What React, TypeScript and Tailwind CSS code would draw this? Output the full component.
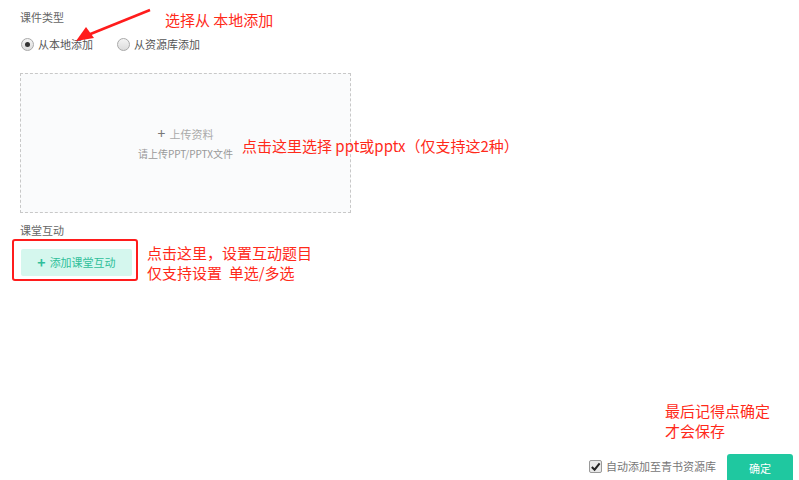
import React from "react"

const note = "absolute text-[15px] leading-[20px] text-[#ff2a1a] whitespace-nowrap"

function Radio({ checked, label }: { checked?: boolean; label: string }) {
  return (
    <label className="flex items-center gap-[4px] text-[11px] text-[#555]">
      <span className="flex h-[13px] w-[13px] items-center justify-center rounded-full border border-[#a9a9a9] bg-gradient-to-b from-[#f4f4f4] to-[#dcdcdc]">
        {checked && <span className="h-[5px] w-[5px] rounded-full bg-[#333]" />}
      </span>
      {label}
    </label>
  )
}

export default function App() {
  return (
    <div className="relative flex h-[480px] w-[799px] flex-col overflow-hidden bg-white font-['Noto_Sans_CJK_SC','Noto_Sans',sans-serif]">
      <div className="flex flex-col pl-[20px] pt-[9px]">
        <div className="text-[11px] leading-[16px] text-[#666]">课件类型</div>
        <div className="mt-[11px] flex items-center gap-[24px] pl-[1px]">
          <Radio checked label="从本地添加" />
          <Radio label="从资源库添加" />
        </div>

        <div className="mt-[20px] flex h-[140px] w-[331px] flex-col items-center justify-center border border-dashed border-[#c8c8c8] bg-[#fafbfc]">
          <div className="text-[11px] leading-[16px] text-[#aaa]">
            <span className="mr-[4px] text-[14px] text-[#777]">+</span>上传资料
          </div>
          <div className="mt-[5px] text-[10px] leading-[14px] text-[#999]">请上传PPT/PPTX文件</div>
        </div>

        <div className="mt-[9px] text-[11px] leading-[16px] text-[#666]">课堂互动</div>
        <div className="ml-[-8px] mt-[1px] w-[126px] rounded-[3px] border-2 border-[#ff1c1c] pb-[3px] pl-[7px] pt-[8px]">
          <button className="flex h-[27px] w-[111px] items-center justify-center rounded-[2px] bg-[#d5f7ee] text-[11px] text-[#2fbf9a]">
            <span className="mr-[4px] text-[14px] font-bold">+</span>添加课堂互动
          </button>
        </div>
      </div>

      <div className="mt-auto flex items-center justify-end gap-[11px] pr-[6px]">
        <label className="flex items-center gap-[4px] text-[11px] text-[#777]">
          <span className="flex h-[13px] w-[13px] items-center justify-center rounded-[2px] border border-[#999] bg-[#e8e8e8]">
            <svg width="11" height="11" viewBox="0 0 12 12">
              <path d="M2 6.5 L5 9.5 L10.5 2.5" fill="none" stroke="#222" strokeWidth="2.2" />
            </svg>
          </span>
          自动添加至青书资源库
        </label>
        <button className="h-[28px] w-[66px] translate-y-[2px] rounded-[3px] bg-[#1fc8a0] text-[11px] text-white">
          确定
        </button>
      </div>

      <svg className="absolute left-0 top-0" width="170" height="50">
        <line x1="150" y1="10" x2="88" y2="35" stroke="#ff1c1c" strokeWidth="2.5" />
        <polygon points="76,41 86,27 94,38" fill="#ff1c1c" />
      </svg>

      <div className={note + " left-[165px] top-[10px]"}>选择从 本地添加</div>
      <div className={note + " left-[242px] top-[136px]"}>点击这里选择 ppt或pptx（仅支持这2种）</div>
      <div className={note + " left-[147px] top-[243px]"}>
        点击这里，设置互动题目
        <br />
        仅支持设置&nbsp; 单选/多选
      </div>
      <div className={note + " left-[665px] top-[401px]"}>
        最后记得点确定
        <br />
        才会保存
      </div>
    </div>
  )
}
